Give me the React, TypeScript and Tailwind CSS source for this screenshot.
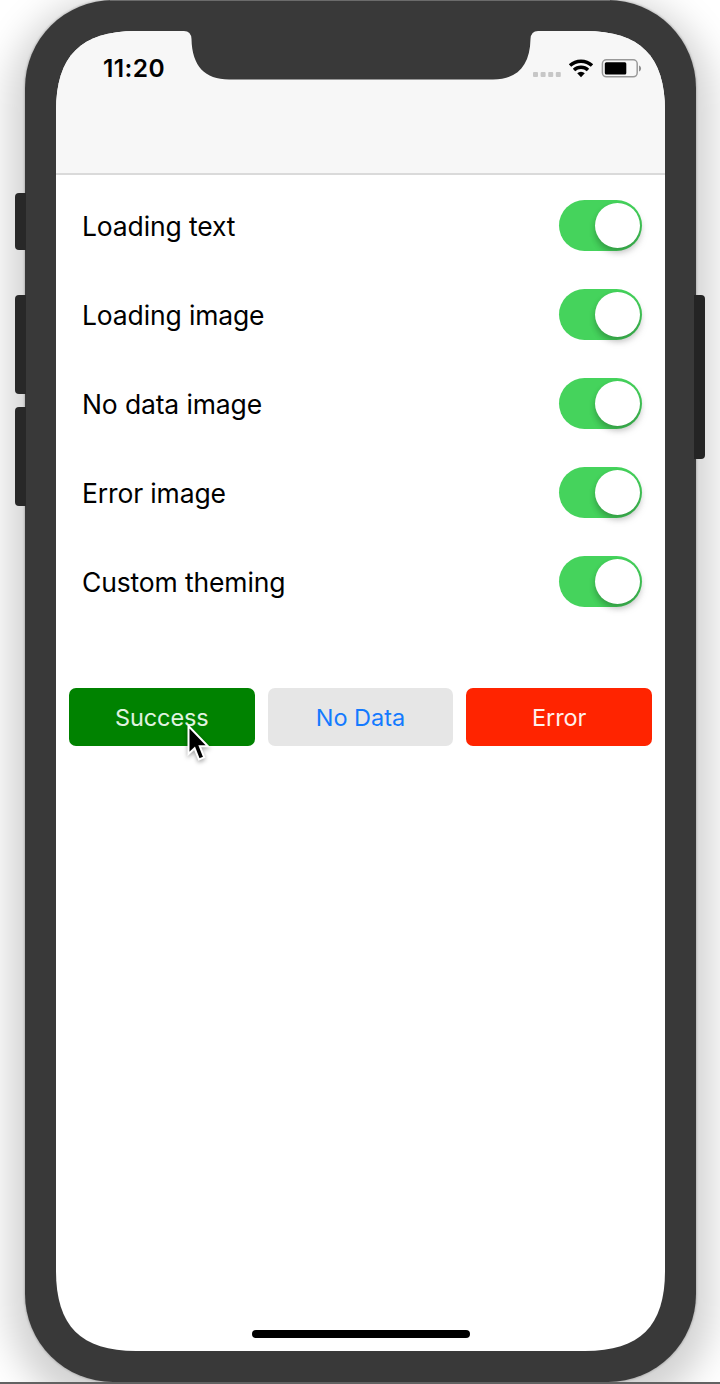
const settings = [
  "Loading text",
  "Loading image",
  "No data image",
  "Error image",
  "Custom theming",
];

function Toggle() {
  return (
    <button role="switch" aria-checked="true" className="flex h-[51px] w-[83px] items-center justify-end rounded-full bg-[#45d35c] pr-[2.5px]">
      <span className="size-[45px] rounded-full bg-white shadow-[0_4px_6px_rgba(0,0,0,0.22),2px_5px_10px_rgba(0,0,0,0.08)]" />
    </button>
  );
}

function StatusIcons() {
  return (
    <svg width="110" height="22" viewBox="532 57 110 22" className="block">
      <g fill="#c7c7c7">
        <rect x="533" y="72" width="5" height="5" rx="1" />
        <rect x="540.6" y="72" width="5" height="5" rx="1" />
        <rect x="548.2" y="72" width="5" height="5" rx="1" />
        <rect x="555.8" y="72" width="5" height="5" rx="1" />
      </g>
      <g fill="none" stroke="#000" strokeWidth="3.5">
        <path d="M570 65.6a16 16 0 0 1 22 0" />
        <path d="M574 70.1a10.2 10.2 0 0 1 14 0" />
      </g>
      <path d="M577.2 73.3a5.4 5.4 0 0 1 7.6 0L581 77.3z" fill="#000" />
      <rect x="602.4" y="59.8" width="34.8" height="17" rx="4" fill="none" stroke="#999" strokeWidth="1.5" />
      <rect x="604.8" y="62.2" width="21.5" height="12.3" rx="1.5" fill="#000" />
      <path d="M639 65.4c2.8 1.4 2.8 4.6 0 6z" fill="#8e8e8e" />
    </svg>
  );
}

export default function App() {
  return (
    <div className="relative h-[1384px] w-[720px] overflow-hidden bg-white pl-[25px] font-[Inter,sans-serif] text-black">
      <div className="h-[1382px] w-[670.5px] rounded-[88px] bg-[#393939] pl-[31px] pt-[31px] shadow-[0_0_2px_1px_rgba(0,0,0,0.16),0_14px_36px_16px_rgba(0,0,0,0.18)]">
        <div className="flex h-[1320px] w-[609px] flex-col overflow-hidden bg-white [clip-path:path('M0_80C0_25_25_0_80_0H529C584_0_609_25_609_80V1240C609_1295_584_1320_529_1320H80C25_1320_0_1295_0_1240Z')]">
          <header className="h-[144px] shrink-0 border-b-2 border-[#dadada] bg-[#f7f7f7]">
            <div className="flex justify-between pl-[47px] pr-[23px] pt-[26px]">
              <span className="-mt-px whitespace-nowrap text-[24.5px] font-semibold leading-[24px] tracking-[0.4px]">11:20</span>
              <StatusIcons />
            </div>
          </header>
          <main className="flex grow flex-col pt-[6px]">
            {settings.map((label) => (
              <div key={label} className="flex h-[89px] items-center justify-between pl-[26px] pr-[23px]">
                <span className="whitespace-nowrap text-[26.5px] leading-[40px] tracking-[-0.14px]">{label}</span>
                <Toggle />
              </div>
            ))}
            <div className="mt-[62px] grid grid-cols-3 gap-[13px] px-[13px]">
              <button className="h-[58px] rounded-[7px] bg-[#008200] pt-px text-[23.5px] tracking-[-0.1px] text-[#e0f3e0]">Success</button>
              <button className="h-[58px] rounded-[7px] bg-[#e6e6e6] pt-px text-[23.5px] text-[#147aff]">No Data</button>
              <button className="h-[58px] rounded-[7px] bg-[#ff2400] pt-px text-[23.5px] tracking-[-0.1px] text-[#fff0ec]">Error</button>
            </div>
            <div className="mb-[13px] ml-[196px] mt-auto h-[8px] w-[218px] rounded-full bg-black" />
          </main>
        </div>
      </div>
      <svg width="360" height="50" viewBox="181 30 360 50" className="absolute left-[181px] top-[30px]">
        <path d="M181 30V31H184Q191 31 191.5 39C192 66 205 79.5 229 79.5H493C517 79.5 530 66 530.5 39Q531 31 538 31H541V30Z" fill="#393939" />
      </svg>
      <div className="absolute left-[15px] top-[193px] h-[57px] w-[11px] rounded-l-[4px] bg-[#282828]" />
      <div className="absolute left-[15px] top-[295px] h-[99px] w-[11px] rounded-l-[4px] bg-[#282828]" />
      <div className="absolute left-[15px] top-[407px] h-[99px] w-[11px] rounded-l-[4px] bg-[#282828]" />
      <div className="absolute left-[694px] top-[295px] h-[164px] w-[10.5px] rounded-r-[4px] bg-[#242424]" />
      <div className="absolute left-[110px] top-0 h-px w-[500px] bg-[#6b6b6b]" />
      <div className="absolute bottom-0 left-0 h-[2px] w-full bg-[#626262]" />
      <svg width="30" height="44" viewBox="184 721 30 44" className="absolute left-[184px] top-[721px] drop-shadow-[0_2px_2px_rgba(0,0,0,0.35)]">
        <path d="M188.5 726V754L194.6 748.3L199 759.5L204.2 757.3L199.8 746.3H208Z" fill="#000" stroke="#fff" strokeWidth="2" />
      </svg>
    </div>
  );
}
